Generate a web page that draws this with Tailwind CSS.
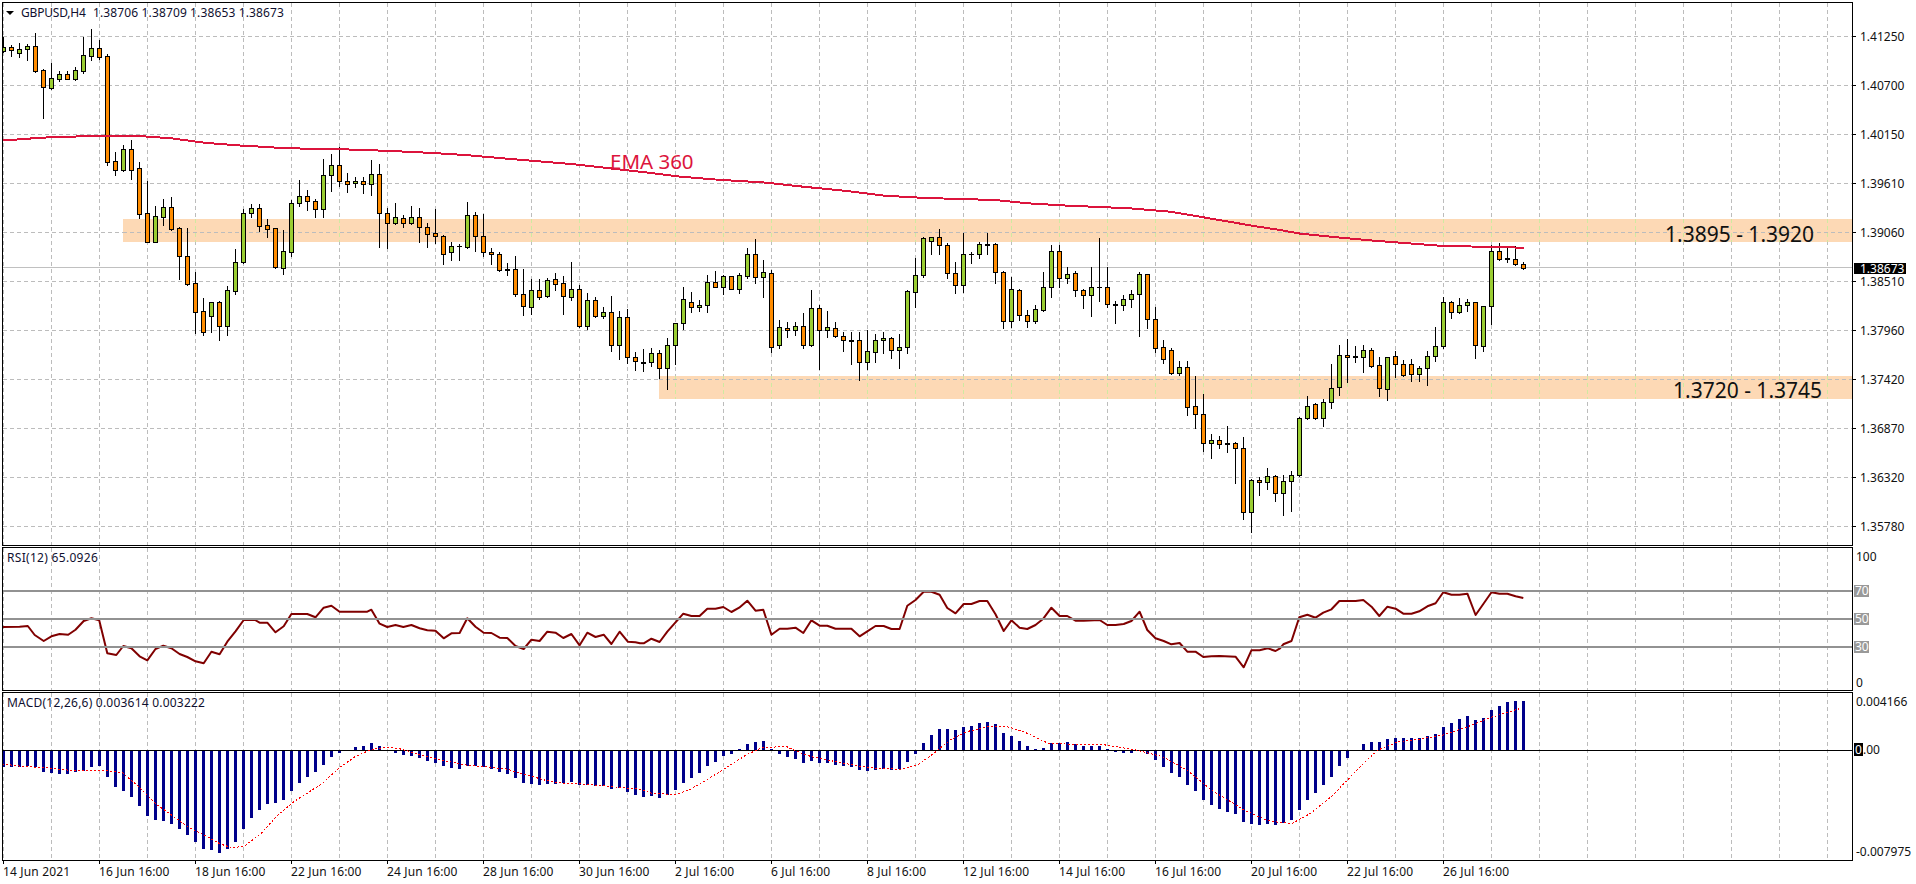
<!DOCTYPE html>
<html lang="en">
<head>
    <meta charset="UTF-8">
    <title>GBPUSD,H4</title>
    <script src="https://cdn.jsdelivr.net/npm/@tailwindcss/browser@4"></script>
</head>
<body class="bg-white">
    <div class="w-[1916px] h-[884px] overflow-hidden flex flex-col gap-px pt-[2px] pl-[2px] font-['Noto_Sans',sans-serif] text-[12px] leading-4 text-[#111]">

        <!-- main chart -->
        <div class="flex h-[544px]">
            <div class="relative w-[1851px] border border-black">
                <svg id="mainChart" class="block w-[1849px] h-[542px]" viewBox="3 3 1849 542"></svg>
                <div class="absolute left-[3px] top-[8px] w-0 h-0 border-x-[4px] border-x-transparent border-t-[4px] border-t-black"></div>
                <span class="absolute left-[18px] top-[2px] tracking-[-0.2px] text-[#101030]">GBPUSD,H4</span>
                <span class="absolute left-[90px] top-[2px] tracking-[0.13px] text-[#101030]">1.38706 1.38709 1.38653 1.38673</span>
                <span class="absolute left-[607px] top-[146px] text-[20.5px] leading-6 text-[#dc143c]">EMA 360</span>
                <span class="absolute left-[1662px] top-[217px] text-[21px] leading-7">1.3895 - 1.3920</span>
                <span class="absolute left-[1670px] top-[373px] text-[21px] leading-7">1.3720 - 1.3745</span>
            </div>
            <div class="relative flex-1 pt-[10px]">
                <div class="flex items-center h-[49px]"><i class="w-[3px] h-px bg-black"></i><span class="ml-[4px]">1.41250</span></div>
                <div class="flex items-center h-[49px]"><i class="w-[3px] h-px bg-black"></i><span class="ml-[4px]">1.40700</span></div>
                <div class="flex items-center h-[49px]"><i class="w-[3px] h-px bg-black"></i><span class="ml-[4px]">1.40150</span></div>
                <div class="flex items-center h-[49px]"><i class="w-[3px] h-px bg-black"></i><span class="ml-[4px]">1.39610</span></div>
                <div class="flex items-center h-[49px]"><i class="w-[3px] h-px bg-black"></i><span class="ml-[4px]">1.39060</span></div>
                <div class="flex items-center h-[49px]"><i class="w-[3px] h-px bg-black"></i><span class="ml-[4px]">1.38510</span></div>
                <div class="flex items-center h-[49px]"><i class="w-[3px] h-px bg-black"></i><span class="ml-[4px]">1.37960</span></div>
                <div class="flex items-center h-[49px]"><i class="w-[3px] h-px bg-black"></i><span class="ml-[4px]">1.37420</span></div>
                <div class="flex items-center h-[49px]"><i class="w-[3px] h-px bg-black"></i><span class="ml-[4px]">1.36870</span></div>
                <div class="flex items-center h-[49px]"><i class="w-[3px] h-px bg-black"></i><span class="ml-[4px]">1.36320</span></div>
                <div class="flex items-center h-[49px]"><i class="w-[3px] h-px bg-black"></i><span class="ml-[4px]">1.35780</span></div>
                <!-- bid price tag -->
                <div class="absolute left-px top-[261px] w-[52px] h-[11px] bg-black text-white leading-[11px] pl-[6px]">1.38673</div>
            </div>
        </div>

        <!-- rsi -->
        <div class="flex h-[144px]">
            <div class="relative w-[1851px] border border-black">
                <svg id="rsiChart" class="block w-[1849px] h-[142px]" viewBox="3 548 1849 142"></svg>
                <span class="absolute left-[4px] top-[2px] tracking-[0.3px] text-[#101030]">RSI(12) 65.0926</span>
            </div>
            <div class="relative flex-1">
                <span class="absolute left-[3px] top-[2px]">100</span>
                <span class="absolute left-px top-[38px] w-[15px] h-[12px] bg-[#999] text-white leading-3 pl-px">70</span>
                <span class="absolute left-px top-[66px] w-[15px] h-[12px] bg-[#999] text-white leading-3 pl-px">50</span>
                <span class="absolute left-px top-[94px] w-[15px] h-[12px] bg-[#999] text-white leading-3 pl-px">30</span>
                <span class="absolute left-[3px] top-[128px]">0</span>
            </div>
        </div>

        <!-- macd -->
        <div class="flex h-[169px]">
            <div class="relative w-[1851px] border border-black">
                <svg id="macdChart" class="block w-[1849px] h-[167px]" viewBox="3 693 1849 167"></svg>
                <span class="absolute left-[4px] top-[2px] tracking-[0.22px] text-[#101030]">MACD(12,26,6) 0.003614 0.003222</span>
            </div>
            <div class="relative flex-1">
                <span class="absolute left-[3px] top-[2px]">0.004166</span>
                <span class="absolute left-px top-[51px] h-[13px] leading-[13px]"><span class="inline-block bg-black text-white w-[9px] pl-px">0</span>.00</span>
                <span class="absolute left-[3px] top-[152px]">-0.007975</span>
            </div>
        </div>

        <!-- time axis -->
        <div class="flex -mt-px pl-px tracking-[0.15px]">
            <div class="w-[96px] relative pt-[3px]"><i class="absolute left-0 top-0 w-px h-[3px] bg-black"></i>14 Jun 2021</div>
            <div class="w-[96px] relative pt-[3px]"><i class="absolute left-0 top-0 w-px h-[3px] bg-black"></i>16 Jun 16:00</div>
            <div class="w-[96px] relative pt-[3px]"><i class="absolute left-0 top-0 w-px h-[3px] bg-black"></i>18 Jun 16:00</div>
            <div class="w-[96px] relative pt-[3px]"><i class="absolute left-0 top-0 w-px h-[3px] bg-black"></i>22 Jun 16:00</div>
            <div class="w-[96px] relative pt-[3px]"><i class="absolute left-0 top-0 w-px h-[3px] bg-black"></i>24 Jun 16:00</div>
            <div class="w-[96px] relative pt-[3px]"><i class="absolute left-0 top-0 w-px h-[3px] bg-black"></i>28 Jun 16:00</div>
            <div class="w-[96px] relative pt-[3px]"><i class="absolute left-0 top-0 w-px h-[3px] bg-black"></i>30 Jun 16:00</div>
            <div class="w-[96px] relative pt-[3px]"><i class="absolute left-0 top-0 w-px h-[3px] bg-black"></i>2 Jul 16:00</div>
            <div class="w-[96px] relative pt-[3px]"><i class="absolute left-0 top-0 w-px h-[3px] bg-black"></i>6 Jul 16:00</div>
            <div class="w-[96px] relative pt-[3px]"><i class="absolute left-0 top-0 w-px h-[3px] bg-black"></i>8 Jul 16:00</div>
            <div class="w-[96px] relative pt-[3px]"><i class="absolute left-0 top-0 w-px h-[3px] bg-black"></i>12 Jul 16:00</div>
            <div class="w-[96px] relative pt-[3px]"><i class="absolute left-0 top-0 w-px h-[3px] bg-black"></i>14 Jul 16:00</div>
            <div class="w-[96px] relative pt-[3px]"><i class="absolute left-0 top-0 w-px h-[3px] bg-black"></i>16 Jul 16:00</div>
            <div class="w-[96px] relative pt-[3px]"><i class="absolute left-0 top-0 w-px h-[3px] bg-black"></i>20 Jul 16:00</div>
            <div class="w-[96px] relative pt-[3px]"><i class="absolute left-0 top-0 w-px h-[3px] bg-black"></i>22 Jul 16:00</div>
            <div class="w-[96px] relative pt-[3px]"><i class="absolute left-0 top-0 w-px h-[3px] bg-black"></i>26 Jul 16:00</div>
        </div>
    </div>

    <script>
        // all y values below are in 3x pixels, read off the chart. g = bull, o = bear
        // high, body top, body bottom, low, colour
        const candles = [
            [110,142,152,155,'g'],[135,142,151,167,'o'],[130,146,158,170,'g'],[132,138,146,180,'g'],[100,139,212,215,'o'],
            [208,211,262,353,'o'],[190,235,264,266,'g'],[213,223,236,243,'g'],[213,223,236,236,'o'],[202,211,236,239,'g'],
            [110,166,212,218,'g'],[87,145,167,180,'g'],[120,145,170,178,'o'],[163,169,485,495,'o'],[457,484,509,524,'o'],
            [436,448,511,512,'g'],[420,448,509,537,'o'],[487,505,641,654,'o'],[544,640,725,725,'o'],[618,649,725,725,'g'],
            [598,622,650,675,'g'],[591,622,686,689,'o'],[680,685,767,837,'o'],[685,769,851,855,'o'],[817,850,935,998,'o'],
            [895,934,995,1005,'o'],[905,907,947,995,'g'],[902,907,979,1020,'o'],[858,871,979,1005,'g'],[748,785,872,881,'g'],
            [628,640,785,790,'g'],[612,624,638,650,'g'],[612,625,677,692,'o'],[657,676,686,710,'o'],[685,685,800,803,'o'],
            [690,754,803,822,'g'],[600,610,755,767,'g'],[540,589,610,617,'g'],[570,589,604,630,'o'],[597,604,628,650,'o'],
            [477,526,628,650,'g'],[462,496,526,573,'g'],[441,496,544,557,'o'],[520,544,551,576,'o'],[530,544,550,560,'g'],
            [530,544,553,580,'o'],[480,523,553,585,'g'],[493,523,640,740,'o'],[625,640,670,745,'o'],[610,652,670,672,'g'],
            [645,655,670,680,'o'],[618,652,670,672,'g'],[625,652,682,725,'o'],[670,682,703,740,'o'],[628,700,709,730,'o'],
            [705,709,763,792,'o'],[725,739,757,780,'g'],[733,738,739,780,'g'],[606,646,740,743,'g'],[636,646,709,752,'o'],
            [642,709,757,768,'o'],[745,757,763,792,'o'],[757,763,811,813,'o'],[790,808,810,824,'g'],[768,808,883,887,'o'],
            [807,882,919,945,'o'],[838,871,920,941,'g'],[838,871,890,897,'o'],[835,839,887,890,'g'],[820,838,851,869,'o'],
            [829,850,889,942,'o'],[787,868,890,900,'g'],[855,868,979,982,'o'],[880,901,979,986,'g'],[892,901,949,950,'o'],
            [922,937,949,953,'g'],[888,937,1036,1052,'o'],[934,952,1036,1077,'g'],[928,952,1072,1088,'o'],[1057,1072,1084,1109,'o'],
            [1048,1086,1088,1112,'g'],[1045,1060,1087,1097,'g'],[1050,1060,1105,1133,'o'],[1015,1036,1105,1167,'g'],[970,970,1036,1092,'g'],
            [862,898,970,986,'g'],[877,907,922,935,'o'],[900,916,922,932,'g'],[825,847,916,935,'g'],[813,847,860,862,'o'],
            [824,829,860,881,'g'],[829,829,866,866,'o'],[820,826,866,878,'g'],[744,763,829,833,'g'],[717,763,832,848,'o'],
            [780,817,832,890,'g'],[811,820,1040,1055,'o'],[960,982,1036,1043,'g'],[967,985,991,1010,'o'],[965,979,991,1005,'g'],
            [939,979,1036,1043,'o'],[870,925,1036,1039,'g'],[915,925,991,1107,'o'],[933,982,991,1012,'g'],[967,985,1009,1012,'o'],
            [996,1009,1021,1052,'o'],[996,1021,1022,1092,'g'],[996,1021,1087,1140,'o'],[990,1054,1087,1108,'g'],[1003,1021,1057,1085,'g'],
            [996,1015,1021,1058,'g'],[1012,1015,1051,1073,'o'],[1003,1042,1051,1103,'g'],[870,873,1042,1060,'g'],[775,826,875,920,'g'],
            [712,715,826,830,'g'],[710,712,724,762,'g'],[688,712,736,762,'o'],[730,736,820,833,'o'],[787,820,856,878,'o'],
            [700,763,856,876,'g'],[757,762,763,788,'g'],[727,733,763,773,'g'],[700,733,734,762,'g'],[730,733,817,850,'o'],
            [813,817,964,983,'o'],[832,868,964,980,'g'],[868,871,946,960,'o'],[930,946,964,980,'o'],[915,928,964,968,'g'],
            [817,860,930,933,'g'],[736,754,860,890,'g'],[736,754,835,860,'o'],[802,823,835,848,'g'],[814,820,871,887,'o'],
            [868,871,886,923,'o'],[802,862,886,947,'g'],[715,861,862,902,'g'],[802,862,913,920,'o'],[903,911,914,968,'g'],
            [885,898,916,930,'g'],[870,883,898,922,'g'],[815,823,883,1007,'g'],[823,823,958,985,'o'],[922,958,1043,1055,'o'],
            [1020,1042,1078,1088,'o'],[1045,1051,1118,1121,'o'],[1083,1102,1118,1125,'g'],[1083,1102,1220,1245,'o'],[1128,1219,1243,1283,'o'],
            [1182,1243,1330,1353,'o'],[1302,1321,1330,1373,'g'],[1308,1321,1333,1343,'o'],[1278,1330,1333,1355,'g'],[1327,1330,1345,1448,'o'],
            [1312,1345,1537,1557,'o'],[1438,1441,1537,1595,'g'],[1432,1441,1447,1485,'o'],[1405,1429,1447,1467,'g'],[1426,1429,1480,1502,'o'],
            [1425,1444,1480,1545,'g'],[1413,1424,1444,1533,'g'],[1251,1254,1424,1427,'g'],[1188,1219,1255,1258,'g'],[1208,1213,1255,1258,'o'],
            [1197,1207,1255,1277,'g'],[1092,1165,1207,1224,'g'],[1035,1066,1162,1184,'g'],[1017,1066,1072,1145,'o'],[1038,1069,1072,1085,'g'],
            [1035,1051,1072,1115,'g'],[1045,1051,1097,1100,'o'],[1072,1096,1165,1187,'o'],[1070,1072,1168,1199,'g'],[1053,1069,1093,1132,'o'],
            [1080,1093,1126,1128,'o'],[1077,1093,1123,1142,'o'],[1098,1105,1123,1142,'g'],[1053,1069,1105,1155,'g'],[982,1039,1069,1082,'g'],
            [890,907,1039,1045,'g'],[904,907,937,953,'o'],[895,916,937,940,'g'],[898,907,916,933,'g'],[905,907,1036,1073,'o'],
            [919,919,1039,1052,'g'],[735,754,919,971,'g'],[730,754,777,780,'o'],[745,775,778,787,'g'],[738,777,793,795,'o'],[787,793,803,806,'o']
        ]

        // macd bars: end of the bar, 631 is the zero line (3x px from y=540)
        const macd = [
            680,681,680,678,681,695,698,701,701,697,692,682,678,710,740,752,770,797,827,839,
            843,851,866,884,905,926,929,938,926,905,866,833,809,791,788,779,752,728,710,695,
            675,650,638,631,621,618,609,618,631,638,644,648,653,662,668,677,683,686,678,677,
            680,686,695,701,713,728,731,734,731,731,728,725,734,734,737,737,746,743,755,764,
            770,767,773,764,749,728,713,698,677,665,647,641,627,612,605,603,628,641,650,656,
            668,662,668,668,674,677,681,689,692,689,686,689,686,665,641,609,585,567,567,570,
            561,557,549,546,552,579,588,603,618,628,624,609,609,606,612,618,618,618,628,635,
            638,638,631,641,660,680,698,710,734,752,779,794,806,815,821,845,851,854,851,854,
            849,840,810,780,759,735,711,678,654,631,612,606,606,597,594,594,594,594,588,582,
            561,549,537,528,540,534,510,498,486,483,483
        ]

        // lines are [x offset, [x, y, x, y...]] with x at 2.45 per px
        const ema = [
            [0, [6,421,50,418,100,413,200,409,340,408,420,415,500,428,580,436,640,440,700,445,820,447,960,453,1060,459,1140,465,1260,478,1400,492,1568,515]],
            [640, [100,530,200,540,300,547,400,560,500,572,600,587,700,594,870,600,950,610,1050,617,1200,625,1300,635,1380,652,1500,677,1568,690]],
            [1276, [60,701,150,712,240,722,400,737,527,741,608,743]]
        ]
        const rsi = [
            [0, [6,261,48,260,68,258,85,285,107,303,126,289,146,282,167,284,185,269,205,243,224,235,243,241,263,340,285,345,302,318,322,325,342,349,361,361,381,327,400,317,420,325,440,342,459,351,479,364,499,370,518,335,538,343,557,305,577,274,597,240,625,240,636,248,655,248,675,277,695,259,714,222,753,222,773,232,793,203,812,197,832,215,900,215,910,209,930,251,949,261,969,255,988,261,1008,255,1028,265,1047,271,1067,272,1087,295,1106,280,1126,279,1145,235,1165,260,1185,278,1204,279,1224,293,1243,294,1263,318,1283,327,1302,299,1322,303,1341,275,1361,278,1380,294,1400,282,1420,316,1439,278,1459,291,1479,284,1498,312,1518,275,1538,305,1557,307,1568,310]],
            [640, [9,310,28,296,48,306,67,275,87,247,106,221,126,228,146,228,165,206,185,206,204,201,224,216,243,203,263,182,283,212,302,209,322,284,342,266,361,266,381,263,400,279,420,241,440,257,459,257,479,266,518,266,538,289,557,274,577,258,597,258,616,267,636,267,655,197,675,180,695,155,714,155,734,164,753,204,773,220,793,192,812,192,832,183,851,183,871,223,891,273,910,241,930,263,949,267,969,255,988,236,1008,203,1028,228,1047,228,1067,242,1087,242,1126,240,1145,255,1165,255,1185,252,1204,243,1224,215,1243,270,1263,295,1283,303,1302,313,1322,309,1341,335,1361,335,1380,351,1400,349,1420,348,1459,350,1479,382,1498,331,1518,331,1538,325,1557,333,1568,325]],
            [1276, [18,313,38,303,57,232,77,224,97,233,116,218,136,208,155,183,195,183,214,180,234,200,253,228,273,200,293,206,312,221,332,221,351,214,371,199,391,190,410,157,430,164,449,164,469,161,489,225,508,192,528,157,547,161,567,161,587,169,606,174]]
        ]
        const signal = [
            [0, [6,672,60,680,100,682,180,692,260,692,300,698,340,740,380,790,420,825,460,860,500,885,540,912,570,924,600,917,640,880,680,826,720,785,790,730,830,685,870,650,910,628,950,622,975,625,1010,637,1060,654,1100,665,1145,676,1185,680,1240,687,1283,702,1340,722,1380,730,1440,733,1500,740,1568,748]],
            [640, [30,760,85,764,120,750,160,722,200,692,260,645,300,622,360,620,380,632,420,650,480,665,560,683,640,688,680,675,720,640,760,600,800,575,860,558,900,560,940,575,1000,610,1060,613,1130,613,1215,630,1280,650,1340,690,1400,750,1480,810,1530,838,1568,848]],
            [1276, [40,850,85,820,140,765,175,720,210,675,250,630,300,605,350,598,410,585,470,560,520,535,600,505]]
        ]

        // flatten a line into svg points, yBase is where the 3x readings start
        function points(line, yBase) {
            const out = []
            line.forEach(([off, vals]) => {
                for (let i = 0; i < vals.length; i += 2) {
                    out.push((off + vals[i] / 2.45).toFixed(1) + ',' + (yBase + vals[i + 1] / 3).toFixed(1))
                }
            })
            return out.join(' ')
        }

        function rect(x, y, w, h, fill) {
            return `<rect x="${x}" y="${y}" width="${w}" height="${h}" fill="${fill}"/>`
        }

        function vGrid(y1, y2, color) {
            let s = ''
            for (let k = 0; k <= 38; k++) {
                const x = 3.5 + 48 * k
                s += `<line x1="${x}" y1="${y1}" x2="${x}" y2="${y2}" stroke="${color}" stroke-dasharray="4 3" shape-rendering="crispEdges"/>`
            }
            return s
        }

        // main window
        let main = vGrid(3, 545, '#bcbcbc')
        for (let k = 0; k < 11; k++) {
            const y = 36.5 + 49 * k
            main += `<line x1="3" y1="${y}" x2="1852" y2="${y}" stroke="#bcbcbc" stroke-dasharray="4 3" shape-rendering="crispEdges"/>`
        }
        // zones, the vertical grid goes a light green where it crosses them
        main += rect(123, 219, 1729, 23, '#fdd9b5') + rect(659, 376, 1193, 23, '#fdd9b5')
        for (let k = 0; k <= 38; k++) {
            const x = 3.5 + 48 * k
            if (x > 123) main += `<line x1="${x}" y1="219" x2="${x}" y2="242" stroke="#cfeaa0" stroke-dasharray="4 3" shape-rendering="crispEdges"/>`
            if (x > 659) main += `<line x1="${x}" y1="376" x2="${x}" y2="399" stroke="#cfeaa0" stroke-dasharray="4 3" shape-rendering="crispEdges"/>`
        }
        main += `<line x1="123" y1="232.5" x2="1852" y2="232.5" stroke="#bcbcbc" stroke-dasharray="4 3" shape-rendering="crispEdges"/>`
        main += `<line x1="659" y1="379.5" x2="1852" y2="379.5" stroke="#bcbcbc" stroke-dasharray="4 3" shape-rendering="crispEdges"/>`
        main += rect(3, 267, 1849, 1, '#c0c0c0')

        candles.forEach(([hi, top, bot, lo, c], i) => {
            const x = 1 + 8 * i
            const t = Math.round(top / 3), b = Math.round(bot / 3)
            main += rect(x + 2, Math.round(hi / 3), 1, Math.round(lo / 3) - Math.round(hi / 3) + 1, '#000')
            main += rect(x, t, 5, b - t + 1, '#000')
            if (b - t > 1) main += rect(x + 1, t + 1, 3, b - t - 1, c == 'g' ? '#9acd32' : '#ff8c00')
        })
        main += `<polyline points="${points(ema, 0)}" fill="none" stroke="#dc143c" stroke-width="2" shape-rendering="crispEdges"/>`
        document.getElementById('mainChart').innerHTML = main

        // rsi window
        let r = vGrid(548, 690, '#bcbcbc')
        r += `<polyline points="${points(rsi, 540)}" fill="none" stroke="#800000" stroke-width="2" stroke-linejoin="round"/>`
        r += rect(3, 590, 1849, 2, '#929292') + rect(3, 618, 1849, 2, '#929292') + rect(3, 646, 1849, 2, '#929292')
        document.getElementById('rsiChart').innerHTML = r

        // macd window
        let m = vGrid(693, 860, '#bcbcbc')
        macd.forEach((v, i) => {
            const end = Math.round(540 + v / 3)
            if (end == 750) return
            m += end > 750 ? rect(2 + 8 * i, 750, 3, end - 750, '#00008b') : rect(2 + 8 * i, end, 3, 750 - end, '#00008b')
        })
        m += rect(3, 750, 1849, 1, '#000')
        m += `<polyline points="${points(signal, 540)}" fill="none" stroke="#ff0000" stroke-width="1" stroke-dasharray="2 2" shape-rendering="crispEdges"/>`
        document.getElementById('macdChart').innerHTML = m
    </script>
</body>
</html>
